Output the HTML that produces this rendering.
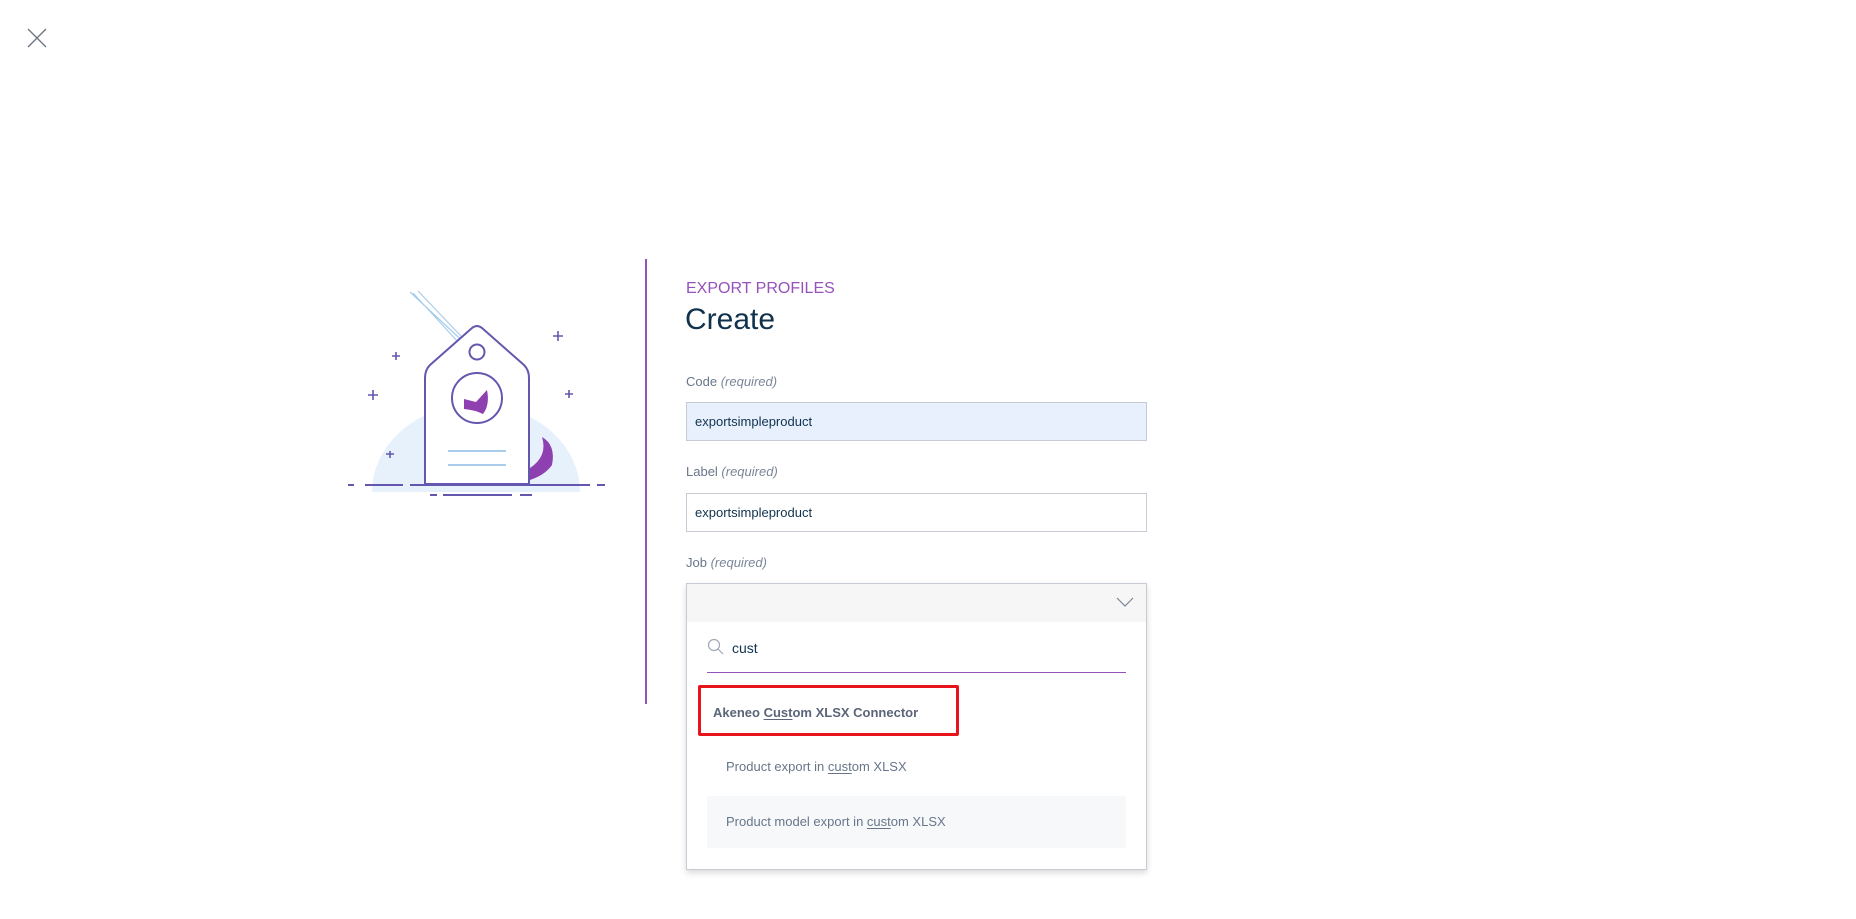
<!DOCTYPE html>
<html><head><meta charset="utf-8"><style>
*{margin:0;padding:0;box-sizing:border-box}
body{width:1856px;height:919px;background:#fff;font-family:"Liberation Sans",sans-serif;position:relative;overflow:hidden}
.a{position:absolute}
.lbl{color:#67768a;font-size:13px}
.lbl i{color:#7a8697}
.inp{border:1px solid #c7cbd4;height:39px;left:686px;width:461px;font-size:13px;color:#11324d;padding:11px 8px;}
u{text-decoration:underline;text-underline-offset:2px}
</style></head><body>
<svg class="a" style="left:26px;top:27px" width="22" height="22" viewBox="0 0 22 22"><path d="M2 2L20 20M20 2L2 20" stroke="#6a7482" stroke-width="1.3" fill="none"/></svg>

<svg class="a" style="left:0;top:0" width="1856" height="919">
<path d="M372 492 A104 88 0 0 1 580 492 Z" fill="#e6f1fc"/>
<path d="M413 293 L470 355 M410 292 L472 350 M418 291 L480 356" stroke="#a9cdea" stroke-width="1.2" fill="none"/>
<path d="M425 484 V378 Q425 370 430 365 L472 328 Q477 324 482 328 L524 365 Q529 370 529 378 V484 Z" fill="#fff" stroke="#6357ae" stroke-width="2"/>
<circle cx="477" cy="352" r="7.5" fill="none" stroke="#6357ae" stroke-width="2"/>
<circle cx="477" cy="398" r="25" fill="#fff" stroke="#6357ae" stroke-width="2"/>
<path d="M464 399 L476 402 L487 390 Q490 405 483 414 Q475 410 464 409 Z" fill="#8e3fb0"/>
<path d="M448 451 H506 M448 465 H506" stroke="#a9cdea" stroke-width="2"/>
<path d="M530 468 Q548 456 542 437 Q556 445 552 465 Q545 475 530 480 Z" fill="#8e3fb0"/>
<path d="M348 485 H354 M365 485 H403 M410 485 H590 M597 485 H605 M430 495 H437 M443 495 H512 M520 495 H532" stroke="#6357ae" stroke-width="2"/>
<path d="M558 331 V341 M553 336 H563 M373 390 V400 M368 395 H378 M396 352 V360 M392 356 H400 M569 390 V398 M565 394 H573 M390 451 V458 M386 454 H394" stroke="#6357ae" stroke-width="1.6"/>
</svg>

<div class="a" style="left:645px;top:259px;width:2px;height:445px;background:#9452ba"></div>
<div class="a" style="left:686px;top:280px;font-size:16px;color:#9452ba">EXPORT PROFILES</div>
<div class="a" style="left:685px;top:303px;font-size:30px;color:#11324d">Create</div>

<div class="a lbl" style="left:686px;top:374px">Code <i>(required)</i></div>
<div class="a inp" style="top:402px;background:#e8f0fe">exportsimpleproduct</div>
<div class="a lbl" style="left:686px;top:464px">Label <i>(required)</i></div>
<div class="a inp" style="top:493px">exportsimpleproduct</div>
<div class="a lbl" style="left:686px;top:555px">Job <i>(required)</i></div>
<div class="a" style="left:686px;top:583px;width:461px;height:287px;border:1px solid #c7cbd4;background:#fff;box-shadow:0 3px 6px rgba(0,0,0,.15)"></div>
<div class="a" style="left:687px;top:584px;width:459px;height:38px;background:#f6f6f6"></div>
<svg class="a" style="left:1116px;top:596px" width="18" height="12"><path d="M1 2L9 10L17 2" stroke="#7a8697" stroke-width="1.2" fill="none"/></svg>
<svg class="a" style="left:707px;top:638px" width="18" height="18"><circle cx="7" cy="7" r="5.5" stroke="#a0a8b4" stroke-width="1.2" fill="none"/><path d="M11 11L16 16" stroke="#a0a8b4" stroke-width="1.2"/></svg>
<div class="a" style="left:732px;top:640px;font-size:14px;color:#11324d">cust</div>
<div class="a" style="left:707px;top:672px;width:419px;height:1px;background:#9452ba"></div>
<div class="a" style="left:698px;top:685px;width:261px;height:51px;border:3px solid #e8141b;border-radius:2px"></div>
<div class="a" style="left:713px;top:705px;font-size:13px;font-weight:bold;color:#5a6577">Akeneo <u>Cust</u>om XLSX Connector</div>
<div class="a" style="left:726px;top:759px;font-size:13px;color:#67768a">Product export in <u>cust</u>om XLSX</div>
<div class="a" style="left:707px;top:796px;width:419px;height:52px;background:#f7f8fa"></div>
<div class="a" style="left:726px;top:814px;font-size:13px;color:#67768a">Product model export in <u>cust</u>om XLSX</div>
</body></html>
